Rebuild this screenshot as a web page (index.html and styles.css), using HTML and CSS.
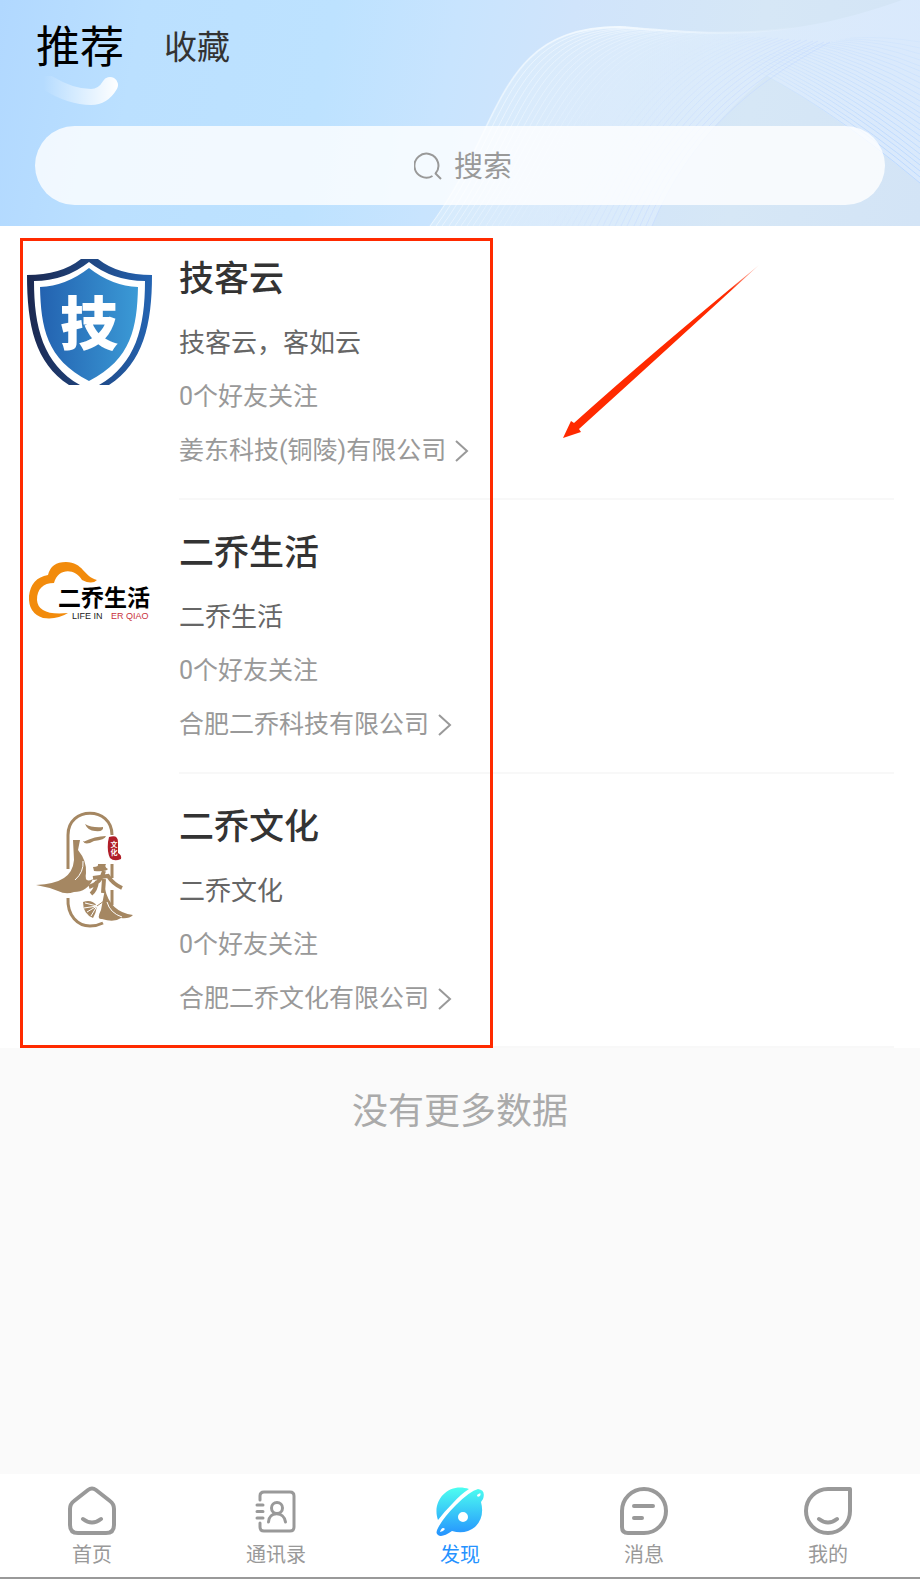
FILE: index.html
```
<!DOCTYPE html>
<html lang="zh-CN">
	<head>
		<meta charset="utf-8">
		<meta name="viewport" content="width=device-width, initial-scale=1">
		<title>发现</title>
		<link rel="stylesheet" href="styles.css">
	</head>
	<body>
		<header class="top">
			<svg class="waves" viewBox="0 0 920 226" preserveAspectRatio="none" aria-hidden="true">
				<defs>
					<linearGradient id="sheet" x1="0" y1="0" x2="1" y2="0">
						<stop offset="0" stop-color="#e4f2fb" stop-opacity=".5"/>
						<stop offset="1" stop-color="#dcebff" stop-opacity=".7"/>
					</linearGradient>
					<linearGradient id="crest" gradientUnits="userSpaceOnUse" x1="430" y1="0" x2="800" y2="0">
						<stop offset="0" stop-color="#f2f9ff" stop-opacity=".1"/>
						<stop offset=".5" stop-color="#f2f9ff"/>
						<stop offset="1" stop-color="#f2f9ff" stop-opacity="0"/>
					</linearGradient>
					<linearGradient id="fan" gradientUnits="userSpaceOnUse" x1="740" y1="0" x2="880" y2="0">
						<stop offset="0" stop-color="#bcd9ff" stop-opacity="0"/>
						<stop offset="1" stop-color="#bcd9ff"/>
					</linearGradient>
				</defs>
				<path d="M430 226C505 125 495 27 620 27C700 33 780 44 902 0H920V183C870 143 820 105 767 76C720 115 680 160 652 226Z" fill="url(#sheet)"/>
				<path d="M430 226C505 125 495 27 620 27C700 33 780 44 902 0" fill="none" stroke="url(#crest)" stroke-width="2"/>
				<g id="lines"></g>
			</svg>
			<nav class="tabs">
				<a href="#recommend" class="tab active">推荐
					<svg class="smile" viewBox="0 0 76 30" aria-hidden="true">
						<defs>
							<linearGradient id="fade" gradientUnits="userSpaceOnUse" x1="0" y1="0" x2="76" y2="0">
								<stop offset="0" stop-color="#fff" stop-opacity="0"/>
								<stop offset="1" stop-color="#fff"/>
							</linearGradient>
						</defs>
						<path d="M0 4Q26 21 48 21Q60 21 67 9" fill="none" stroke="url(#fade)" stroke-width="16" stroke-linecap="round"/>
					</svg>
				</a>
				<a href="#favorite" class="tab">收藏</a>
			</nav>
			<button class="search" type="button">
				<svg width="28" height="28" viewBox="0 0 28 28" fill="none" stroke="#999" stroke-width="2" aria-hidden="true">
					<path d="M18.500 24A12 12 0 1 1 21.500 21.500"/>
					<path d="M21 21l6 6"/>
				</svg>
				<span>搜索</span>
			</button>
		</header>

		<main class="content">
			<ul class="list">
				<li class="item">
					<svg class="logo" viewBox="0 0 126 126" role="img" aria-label="技客云">
						<defs>
							<linearGradient id="rim"><stop offset="0" stop-color="#1b2850"/><stop offset="1" stop-color="#2464b2"/></linearGradient>
							<linearGradient id="face"><stop offset="0" stop-color="#2362b0"/><stop offset="1" stop-color="#3b9ad6"/></linearGradient>
						</defs>
						<path d="M55 0H72Q92 16 126 16C126 66 117 104 83 126H43C9 104 1 66 1 16Q35 16 55 0Z" fill="url(#rim)"/>
						<path d="M63 3Q87 22 119 22C119 68 110 105 73 126H54C17 105 8 68 8 22Q39 22 63 3Z" fill="#fff"/>
						<path d="M63 9Q86 27 112 28C111 68 106 100 63 122C20 100 15 68 14 28Q40 27 63 9Z" fill="url(#face)"/>
						<text x="63" y="86" class="shield-text">技</text>
					</svg>
					<div class="info">
						<h2>技客云</h2>
						<p class="desc">技客云，客如云</p>
						<p class="fans">0个好友关注</p>
						<a href="#company1" class="company">姜东科技(铜陵)有限公司
							<svg class="chevron" viewBox="0 0 14 24" aria-hidden="true"><path d="M1 2l11 10L1 22"/></svg>
						</a>
					</div>
				</li>
				<li class="item">
					<svg class="logo" viewBox="0 0 126 126" role="img" aria-label="二乔生活">
						<path d="M42 80Q31 87 17 85Q2 80 3 63Q5 45 22 42Q25 29 40 29C57 29 58 44 71 47Q66 52 56 47C49 35 32 35 28 50C17 50 11 56 11 67Q12 83 42 80Z" fill="#f28b0c"/>
						<text x="32" y="73" class="ink-text">二乔生活</text>
						<text x="46" y="86" class="tiny-text">LIFE IN</text>
						<text x="85" y="86" class="tiny-text red">ER QIAO</text>
					</svg>
					<div class="info">
						<h2>二乔生活</h2>
						<p class="desc">二乔生活</p>
						<p class="fans">0个好友关注</p>
						<a href="#company2" class="company">合肥二乔科技有限公司
							<svg class="chevron" viewBox="0 0 14 24" aria-hidden="true"><path d="M1 2l11 10L1 22"/></svg>
						</a>
					</div>
				</li>
				<li class="item">
					<svg class="logo" viewBox="0 0 126 126" role="img" aria-label="二乔文化">
						<g fill="none" stroke="#a58762" stroke-width="3">
							<path d="M42 62V28C42 -1 86 -1 86 28M86 57V71M86 83V98M42 91C41 109 52 119 64 119Q71 119 77 116"/>
						</g>
						<g fill="#a58762">
							<path d="M59 17Q66 21 77 20Q78 25 69 24Q62 24 59 17ZM57 35Q69 29 80 29Q79 33 68 34Q59 39 57 34Z"/>
							<path d="M47 33H54L52 43Q61 54 60 66Q58 77 67 72Q61 85 48 85Q40 88 32 84Q22 80 10 78Q29 77 38 71Q47 65 48 53Z"/>
							<path d="M67 60Q73 60 72 57H80Q78 60 82 62Q80 65 68 64Z"/>
						</g>
						<path d="M78 64Q75 76 63 80M67 71L82 69Q87 77 96 81M71 74Q70 83 65 87M78 72L77 86" fill="none" stroke="#a58762" stroke-width="4"/>
						<g fill="#a58762">
							<path d="M79 82Q84 105 107 108Q103 112 95 111Q88 116 76 112Q70 113 75 103Z"/>
							<path d="M57 95Q66 92 71 99Q70 106 67 111Q57 107 57 95Z"/>
						</g>
						<path d="M59 96L71 99M58 101L71 99M61 105L71 99M65 109L71 99M49 73Q58 65 57 54M81 95Q84 106 96 110" fill="none" stroke="#fff" stroke-width="1"/>
						<path d="M71 99L78 94" stroke="#a58762" stroke-width="1"/>
						<path d="M83 30Q92 27 92 35V46Q96 48 95 52Q88 55 84 51Q81 45 82 35Z" fill="#b01e28"/>
						<text x="88" y="40" class="seal-text">文</text>
						<text x="88" y="48" class="seal-text">化</text>
					</svg>
					<div class="info">
						<h2>二乔文化</h2>
						<p class="desc">二乔文化</p>
						<p class="fans">0个好友关注</p>
						<a href="#company3" class="company">合肥二乔文化有限公司
							<svg class="chevron" viewBox="0 0 14 24" aria-hidden="true"><path d="M1 2l11 10L1 22"/></svg>
						</a>
					</div>
				</li>
			</ul>
			<div class="mark"></div>
			<svg class="arrow" viewBox="0 0 196 176" aria-hidden="true">
				<defs>
					<linearGradient id="tail" x1="1" y1="0" x2="0" y2="1"><stop offset="0" stop-color="#ff2a00" stop-opacity=".2"/><stop offset=".15" stop-color="#ff2a00"/></linearGradient>
				</defs>
				<path d="M0 174L8 157L11 159Q90 88 196 1Q110 80 16 165L18 168Z" fill="url(#tail)"/>
			</svg>
			<p class="nomore">没有更多数据</p>
		</main>

		<nav class="tabbar">
			<a href="#home">
				<svg viewBox="0 0 50 50" fill="none" stroke="#999" stroke-width="4" stroke-linecap="round" aria-hidden="true">
					<path d="M21 4Q25 1 29 4L43 15Q47 18 47 23V39Q47 47 39 47H11Q3 47 3 39V23Q3 18 7 15Z"/>
					<path d="M16 33Q25 40 34 33"/>
				</svg>
				首页
			</a>
			<a href="#contacts">
				<svg viewBox="0 0 50 50" fill="none" stroke="#999" stroke-width="3" stroke-linecap="round" aria-hidden="true">
					<path d="M9 14V10Q9 6 13 6H39Q43 6 43 10V41Q43 45 39 45H13Q9 45 9 41V37"/>
					<path d="M6 19H12M6 25.500H12M6 32H12"/>
					<circle cx="26" cy="22" r="5.500"/>
					<path d="M17.500 36C18 25 33 25 34.500 36"/>
				</svg>
				通讯录
			</a>
			<a href="#discover" class="current">
				<svg viewBox="0 0 50 50" aria-hidden="true">
					<defs>
						<linearGradient id="planet" x1="0" y1="0" x2="0" y2="1"><stop offset="0" stop-color="#4dfff0"/><stop offset="1" stop-color="#2592ff"/></linearGradient>
					</defs>
					<path d="M3 34C-4 14 14 -4 34 3Q26 8 18 17Q9 26 3 34ZM3 42Q8 32 21 19Q35 5 43 3Q51 4 48 13L46 16Q50 31 40 41Q30 49 17 45Q7 52 3 49Q0 47 3 42ZM5 46Q8 46 10 43Q7 40 5 46ZM42 9Q42 12 45 10Q47 5 42 9ZM23 31A5 5 0 1 0 33 31A5 5 0 1 0 23 31Z" fill="url(#planet)" fill-rule="evenodd"/>
				</svg>
				发现
			</a>
			<a href="#message">
				<svg viewBox="0 0 50 50" fill="none" stroke="#999" stroke-width="4" stroke-linecap="round" aria-hidden="true">
					<path d="M25 3A22 22 0 0 1 25 47H9Q3 47 3 41V25A22 22 0 0 1 25 3Z"/>
					<path d="M15 20H34M15 32H23"/>
				</svg>
				消息
			</a>
			<a href="#mine">
				<svg viewBox="0 0 50 50" fill="none" stroke="#999" stroke-width="4" stroke-linecap="round" stroke-linejoin="round" aria-hidden="true">
					<path d="M25 3H47V25A22 22 0 1 1 25 3Z"/>
					<path d="M16 33Q25 40 34 33"/>
				</svg>
				我的
			</a>
		</nav>
		<script src="waves.js"></script>
	</body>
</html>
```
FILE: styles.css
```
* {
  box-sizing: border-box;
}

body {
  margin: 0;
  min-height: 100vh;
  display: flex;
  flex-direction: column;
  background-color: #fafafa;
  font-family: Roboto, "Noto Sans CJK SC", sans-serif;
  color: #333;
}

a {
  color: inherit;
  text-decoration: none;
}

h2, p, ul {
  margin: 0;
  padding: 0;
}

.top {
  position: relative;
  padding: 18px 35px 21px;
  background: linear-gradient(100deg, #b1d8ff 0%, #bbe0ff 15%, #bde2ff 35%, #c8e4fe 48%, #d0e4fb 60%, #d6e7f6 80%, #d3e4f6 100%);
}

.waves {
  position: absolute;
  inset: 0;
  width: 100%;
  height: 100%;
}

.tabs {
  position: relative;
  display: flex;
  gap: 40px;
  height: 108px;
}

.tab {
  font-size: 33px;
  line-height: 60px;
}

.tab.active {
  position: relative;
  padding-left: 1px;
  font-size: 44px;
  color: #000;
}

.smile {
  position: absolute;
  left: 8px;
  top: 58px;
  width: 76px;
  height: 30px;
}

.search {
  position: relative;
  display: flex;
  align-items: center;
  justify-content: center;
  gap: 12px;
  width: 100%;
  height: 79px;
  padding: 0 0 0 6px;
  border: none;
  border-radius: 40px;
  background-color: rgba(255, 255, 255, 0.8);
  font-family: inherit;
  font-size: 29px;
  color: #999;
  cursor: pointer;
}

.search span {
  padding-bottom: 4px;
}

.content {
  position: relative;
  flex: 1;
}

.list {
  list-style: none;
  background-color: #fff;
}

.item {
  display: flex;
  gap: 27px;
  padding: 0 26px;
}

.logo {
  flex: none;
  width: 126px;
  height: 126px;
  margin-top: 33px;
}

.info {
  flex: 1;
  padding: 32px 0 31px;
  border-bottom: 2px solid #f8f8f8;
}

.info h2 {
  font-size: 35px;
  font-weight: 500;
  line-height: 44px;
}

.desc {
  margin-top: 23px;
  font-size: 26px;
  line-height: 36px;
  color: #666;
}

.fans {
  margin: 20px 0 22px;
  font-size: 25px;
  line-height: 32px;
  color: #999;
}

.company {
  display: flex;
  align-items: center;
  gap: 9px;
  font-size: 25px;
  line-height: 32px;
  color: #999;
}

.chevron {
  width: 14px;
  height: 24px;
  fill: none;
  stroke: #999;
  stroke-width: 2;
}

.shield-text {
  font-size: 58px;
  font-weight: 900;
  fill: #fff;
  text-anchor: middle;
}

.ink-text {
  font-size: 23px;
  font-weight: 700;
  fill: #000;
}

.tiny-text {
  font-family: "Liberation Sans", sans-serif;
  font-size: 9px;
  fill: #222;
}

.red {
  fill: #c8323c;
}

.seal-text {
  font-size: 7px;
  font-weight: 700;
  fill: #fff;
  text-anchor: middle;
}

/* red frame around the list */
.mark {
  position: absolute;
  left: 20px;
  top: 12px;
  width: 473px;
  height: 810px;
  border: 3px solid #ff2a00;
}

.arrow {
  position: absolute;
  left: 563px;
  top: 38px;
  width: 196px;
  height: 176px;
}

.nomore {
  padding: 38px 0;
  font-size: 36px;
  line-height: 52px;
  text-align: center;
  color: #aaa;
}

.tabbar {
  display: flex;
  height: 105px;
  padding-top: 12px;
  background-color: #fff;
  border-bottom: 2px solid #999;
}

.tabbar a {
  flex: 1;
  display: flex;
  flex-direction: column;
  align-items: center;
  font-size: 20px;
  line-height: 39px;
  color: #999;
}

.tabbar svg {
  width: 50px;
  height: 50px;
}

.tabbar .current {
  color: #2592ff;
}
```
FILE: waves.js
```
// fine lines that fan out over the header
const lines = document.getElementById("lines");
let html = "";
const mix = (a, b, t) => Math.round(a + (b - a) * t);

for (let i = 0; i <= 36; i++) {
  let t = i / 36;
  let color = t < 0.5 ? "#f2f9ff" : "#c8dcff";
  let opacity = Math.abs(t - 0.5) * 1.4;
  html += `<path d="M${mix(430, 652, t)} 226C${mix(505, 690, t)} ${mix(125, 135, t)} ${mix(495, 750, t)} ${mix(27, 85, t)} ${mix(620, 830, t)} ${mix(27, 42, t)}" stroke="${color}" opacity="${opacity}"/>`;
}
for (let i = 0; i <= 24; i++) {
  let t = i / 24;
  html += `<path d="M${mix(735, 850, t)} ${mix(60, 38, t)}Q${mix(820, 885, t)} ${mix(99, 36, t)} 920 ${mix(183, 42, t)}" stroke="url(#fan)" opacity="${1 - t * 0.8}"/>`;
}
lines.innerHTML = `<g fill="none" stroke-width="1">${html}</g>`;
```
